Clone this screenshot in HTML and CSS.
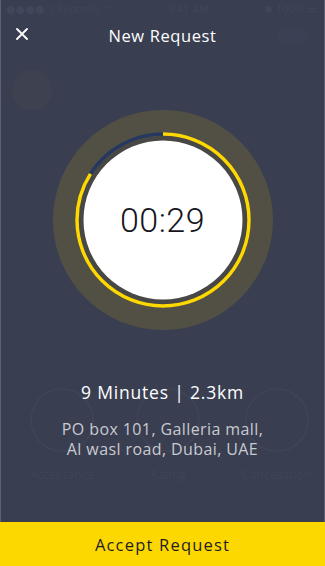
FILE: index.html
```html
<!DOCTYPE html>
<html>
<head>
<meta charset="utf-8">
<link rel="stylesheet" href="styles.css">
</head>
<body>
<div class="screen">
  <div class="ghost ghost-status">
    <span>●●●●○ Pedrollo ⌔</span><span>9:41 AM</span><span>✱ 100% ▭</span>
  </div>
  <div class="ghost ghost-home"></div>
  <div class="ghost ghost-toggle"></div>
  <div class="ghost ghost-stats">
    <div class="ghost-stat"><div class="ghost-ring"></div><div>Acceptance</div></div>
    <div class="ghost-stat"><div class="ghost-ring"></div><div>Rating</div></div>
    <div class="ghost-stat"><div class="ghost-ring"></div><div>Cancellation</div></div>
  </div>

  <header class="header">
    <svg class="close" width="12" height="12" viewBox="0 0 12 12">
      <path d="M1 1 L11 11 M11 1 L1 11" stroke="#ffffff" stroke-width="1.8" stroke-linecap="round"/>
    </svg>
    <h1 class="title">New Request</h1>
  </header>

  <main class="content">
    <div class="timer">
      <svg width="220" height="220" viewBox="0 0 220 220">
        <circle cx="110" cy="110" r="110" fill="#525045"/>
        <circle cx="110" cy="110" r="84" fill="#474745"/>
        <circle cx="110" cy="110" r="86" fill="none" stroke="#26385f" stroke-width="3.5"/>
        <circle cx="110" cy="110" r="86" fill="none" stroke="#ffd800" stroke-width="3.5"
          stroke-dasharray="453.3 600" transform="rotate(-90 110 110)"/>
        <circle cx="110" cy="110" r="79.5" fill="#ffffff"/>
      </svg>
      <div class="time">00:29</div>
    </div>

    <div class="info">
      <div class="eta">9 Minutes | 2.3km</div>
      <div class="address">PO box 101, Galleria mall,<br>Al wasl road, Dubai, UAE</div>
    </div>
  </main>

  <button class="accept">Accept Request</button>
</div>
</body>
</html>
```
FILE: styles.css
```css
* { box-sizing: border-box; }
html, body { margin: 0; padding: 0; }
body { background: #393e51; font-family: "Open Sans", "DejaVu Sans", sans-serif; }

.screen {
  position: relative;
  width: 325px;
  height: 566px;
  background: #393e51;
  display: flex;
  flex-direction: column;
  overflow: hidden;
  box-shadow: inset 1px 0 0 #5e6174, inset -1px 0 0 #5e6174;
}

.ghost { position: absolute; color: #41465a; }
.ghost-status {
  top: 1px; left: 6px; right: 8px;
  display: flex; justify-content: space-between;
  font-size: 11px;
  color: #41465a;
}
.ghost-home {
  top: 70px; left: 12px;
  width: 40px; height: 40px; border-radius: 50%;
  background: #3e4150;
}
.ghost-toggle {
  top: 27px; left: 277px;
  width: 32px; height: 18px; border-radius: 9px;
  background: #3b4154;
}
.ghost-stats {
  top: 388px; left: 30px; right: 14px;
  display: flex; justify-content: space-between;
  font-size: 12px; color: #3f4457;
}
.ghost-stat { display: flex; flex-direction: column; align-items: center; gap: 14px; }
.ghost-ring {
  width: 64px; height: 64px; border-radius: 50%;
  border: 2px solid #3e4356;
}

.header {
  position: relative;
  height: 72px;
  display: flex;
  align-items: flex-start;
  justify-content: center;
  padding-top: 25px;
}
.close { position: absolute; left: 16px; top: 28px; }
.title {
  margin: 0;
  font-size: 16.5px;
  font-weight: 400;
  color: #ffffff;
  line-height: 22px;
  letter-spacing: 0.6px;
}

.content {
  position: relative;
  flex: 1;
  display: flex;
  flex-direction: column;
  align-items: center;
  padding-top: 38px;
}
.timer {
  position: relative;
  width: 220px; height: 220px;
}
.timer svg { display: block; }
.time {
  position: absolute; inset: 0;
  display: flex; align-items: center; justify-content: center;
  font-family: Roboto, "Liberation Sans", Arial, sans-serif;
  font-weight: 300;
  font-size: 34px;
  color: #15161c;
  letter-spacing: 0.5px;
}

.info {
  margin-top: 50px;
  text-align: center;
}
.eta {
  font-size: 17.5px;
  color: #ffffff;
  line-height: 24px;
  letter-spacing: 0.8px;
}
.address {
  margin-top: 15px;
  font-size: 16px;
  line-height: 20px;
  color: #c9cad0;
  letter-spacing: 0.4px;
}

.accept {
  height: 44px;
  width: 100%;
  border: none;
  background: #fdd700;
  color: #1d1d22;
  font-family: "Open Sans", "DejaVu Sans", sans-serif;
  font-size: 16.5px;
  letter-spacing: 1.2px;
  padding: 0;
  flex-shrink: 0;
}
```
